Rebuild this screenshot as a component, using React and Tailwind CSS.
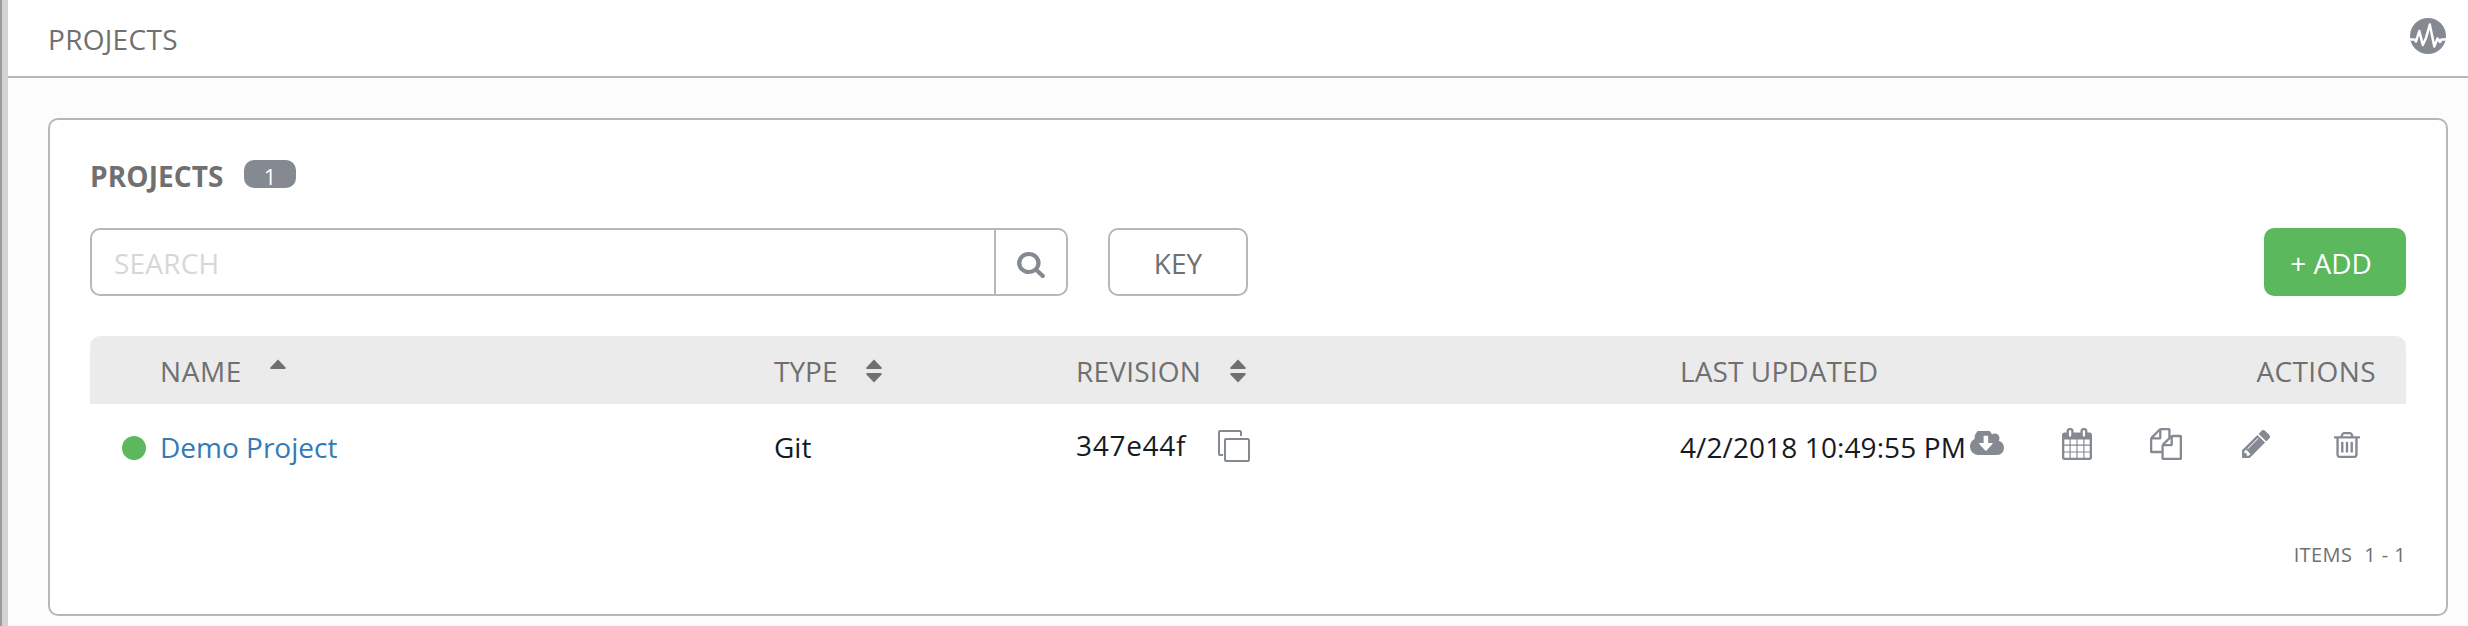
const ICONS = {
  search: {
    box: "0 0 1792 1792",
    d: "M1216 832q0-185-131.5-316.5t-316.5-131.5-316.5 131.5-131.5 316.5 131.5 316.5 316.5 131.5 316.5-131.5 131.5-316.5zm512 832q0 52-38 90t-90 38q-54 0-90-38l-343-342q-179 124-399 124-143 0-273.5-55.5t-225-150-150-225-55.5-273.5 55.5-273.5 150-225 225-150 273.5-55.5 273.5 55.5 225 150 150 225 55.5 273.5q0 220-124 399l343 343q37 37 37 90z",
  },
  calendar: {
    box: "64 0 1664 1792",
    d: "M192 1664h288v-288h-288v288zm352 0h320v-288h-320v288zm-352-352h288v-320h-288v320zm352 0h320v-320h-320v320zm-352-384h288v-288h-288v288zm736 736h320v-288h-320v288zm-384-736h320v-288h-320v288zm768 736h288v-288h-288v288zm-384-352h320v-320h-320v320zm-352-864v-288q0-13-9.5-22.5t-22.5-9.5h-64q-13 0-22.5 9.5t-9.5 22.5v288q0 13 9.5 22.5t22.5 9.5h64q13 0 22.5-9.5t9.5-22.5zm736 864h288v-320h-288v320zm-384-384h320v-288h-320v288zm384 0h288v-288h-288v288zm32-480v-288q0-13-9.5-22.5t-22.5-9.5h-64q-13 0-22.5 9.5t-9.5 22.5v288q0 13 9.5 22.5t22.5 9.5h64q13 0 22.5-9.5t9.5-22.5zm384-64v1280q0 52-38 90t-90 38h-1408q-52 0-90-38t-38-90v-1280q0-52 38-90t90-38h128v-96q0-66 47-113t113-47h64q66 0 113 47t47 113v96h384v-96q0-66 47-113t113-47h64q66 0 113 47t47 113v96h128q52 0 90 38t38 90z",
  },
  files: {
    box: "0 0 1792 1792",
    d: "M1696 384q40 0 68 28t28 68v1216q0 40-28 68t-68 28h-960q-40 0-68-28t-28-68v-288h-544q-40 0-68-28t-28-68v-672q0-40 20-88t48-76l408-408q28-28 76-48t88-20h416q40 0 68 28t28 68v328q68-40 128-40h416zm-544 213l-299 299h299v-299zm-640-384l-299 299h299v-299zm196 647l316-316v-416h-384v416q0 40-28 68t-68 28h-416v640h512v-256q0-40 20-88t48-76zm956 804v-1152h-384v416q0 40-28 68t-68 28h-416v640h896z",
  },
  pencil: {
    box: "128 149 1515 1515",
    d: "M491 1536l91-91-235-235-91 91v107h128v128h107zm523-928q0-22-22-22-10 0-17 7l-542 542q-7 7-7 17 0 22 22 22 10 0 17-7l542-542q7-7 7-17zm-54-192l416 416-832 832h-416v-416zm683 96q0 53-37 90l-166 166-416-416 166-165q36-38 90-38 53 0 91 38l235 234q37 39 37 91z",
  },
  trash: {
    box: "192 128 1408 1536",
    d: "M704 736v576q0 14-9 23t-23 9h-64q-14 0-23-9t-9-23v-576q0-14 9-23t23-9h64q14 0 23 9t9 23zm256 0v576q0 14-9 23t-23 9h-64q-14 0-23-9t-9-23v-576q0-14 9-23t23-9h64q14 0 23 9t9 23zm256 0v576q0 14-9 23t-23 9h-64q-14 0-23-9t-9-23v-576q0-14 9-23t23-9h64q14 0 23 9t9 23zm128 724v-948h-896v948q0 22 7 40.5t14.5 27 10.5 8.5h832q3 0 10.5-8.5t14.5-27 7-40.5zm-672-1076h448l-48-117q-7-9-17-11h-317q-10 2-17 11zm928 32v64q0 14-9 23t-23 9h-96v948q0 83-47 143.5t-113 60.5h-832q-66 0-113-58.5t-47-141.5v-952h-96q-14 0-23-9t-9-23v-64q0-14 9-23t23-9h309l70-167q15-37 54-63t79-26h320q40 0 79 26t54 63l70 167h309q14 0 23 9t9 23z",
  },
  cloud: {
    box: "-64 256 1920 1280",
    d: "M1216 928q0-14-9-23t-23-9h-224v-352q0-13-9.5-22.5t-22.5-9.5h-192q-13 0-22.5 9.5t-9.5 22.5v352h-224q-13 0-22.5 9.5t-9.5 22.5q0 14 9 23l352 352q9 9 23 9t23-9l351-351q10-12 10-24zm640 224q0 159-112.5 271.5t-271.5 112.5h-1088q-185 0-316.5-131.5t-131.5-316.5q0-130 70-240t188-165q-2-30-2-43 0-212 150-362t362-150q156 0 285.5 87t188.5 231q71-62 166-62 106 0 181 75t75 181q0 76-41 138 130 31 213.5 135.5t83.5 238.5z",
  },
};

function Icon({ name, className }) {
  const { box, d } = ICONS[name];
  return (
    <svg viewBox={box} preserveAspectRatio="none" fill="currentColor" className={`shrink-0 ${className}`}>
      <path d={d} />
    </svg>
  );
}

function ActivityIcon() {
  return (
    <svg viewBox="0 0 36 36" className="h-9 w-9 shrink-0">
      <circle cx="18" cy="18" r="18" fill="#848992" />
      <path
        d="M0 21.5H4.5L6 23.5L9.3 13L12.8 27L16 20L19.8 6.5L24.3 28.5L27.5 20.5L30 24L31.5 21.5H36"
        fill="none"
        stroke="#fff"
        strokeWidth="2.5"
        strokeLinejoin="round"
      />
    </svg>
  );
}

function SortIcon({ both }) {
  return (
    <svg viewBox="0 0 16 24" className="h-6 w-4 shrink-0" fill="#707070">
      <path d="M8 .5L15.6 8.5Q16 10 15 10H1Q0 10 .4 8.5Z" />
      {both && <path d="M8 23.5L15.6 15.5Q16 14 15 14H1Q0 14 .4 15.5Z" />}
    </svg>
  );
}

function CopyIcon() {
  return (
    <svg viewBox="0 0 32 32" className="h-8 w-8 shrink-0" fill="none" stroke="#848992" strokeWidth="2">
      <path d="M23 6V2Q23 1 22 1H2Q1 1 1 2V24Q1 25 2 25H5" />
      <rect x="7" y="9" width="24" height="22" rx="1" />
    </svg>
  );
}

export default function App() {
  return (
    <div className="flex h-[626px] w-[2468px] overflow-hidden bg-[#fcfcfc] font-['Open_Sans','Noto_Sans',sans-serif] text-[28px] leading-10 text-[#707070]">
      <div className="w-0.5 bg-[#9b9b9b]" />
      <div className="w-1.5 bg-[#d4d4d4]" />
      <div className="flex min-w-0 flex-1 flex-col">
        <header className="flex h-[78px] items-center justify-between border-b-2 border-[#b7b7b7] bg-white pr-[22px] pl-10">
          <div className="pt-0.5 tracking-[0.3px]">PROJECTS</div>
          <div className="-mt-1">
            <ActivityIcon />
          </div>
        </header>
        <main className="mt-10 mr-5 ml-10 flex h-[498px] flex-col rounded-[10px] border-2 border-[#b7b7b7] bg-white px-10">
          <div className="mt-[34px] flex h-10 items-center">
            <h1 className="w-[154px] pt-[3px] font-bold tracking-[0.1px]">PROJECTS</h1>
            <span className="flex h-7 w-[52px] items-center justify-center rounded-[10px] bg-[#848992] pt-[3px] text-[22px] text-white">1</span>
          </div>
          <div className="mt-[34px] flex h-[68px]">
            <div className="flex w-[978px] rounded-[10px] border-2 border-[#b7b7b7]">
              <div className="flex w-[904px] items-center border-r-2 border-[#b7b7b7] pt-0.5 pl-[22px] tracking-[0.2px] text-[#d7d7d7]">SEARCH</div>
              <div className="flex flex-1 items-center justify-center pt-1 text-[#848992]">
                <Icon name="search" className="h-7 w-[30px]" />
              </div>
            </div>
            <button className="ml-10 w-[140px] rounded-[10px] border-2 border-[#b7b7b7] pt-0.5">KEY</button>
            <button className="ml-auto w-[142px] rounded-[10px] bg-[#5cb85c] pt-0.5 pr-2 text-white">+ ADD</button>
          </div>
          <div className="mt-10 flex h-[68px] items-center rounded-t-[10px] bg-[#ebebeb] pt-0.5 pr-[30px] pl-[70px]">
            <div className="flex w-[614px] items-center"><span className="w-[110px] tracking-[0.6px]">NAME</span><SortIcon /></div>
            <div className="flex w-[302px] items-center"><span className="w-[92px]">TYPE</span><SortIcon both /></div>
            <div className="flex w-[604px] items-center"><span className="w-[154px] tracking-[0.2px]">REVISION</span><SortIcon both /></div>
            <div className="tracking-[0.1px]">LAST UPDATED</div>
            <div className="ml-auto tracking-[0.4px]">ACTIONS</div>
          </div>
          <div className="flex h-[88px] items-center pl-8 text-[#161b1f]">
            <span className="mr-3.5 h-6 w-6 rounded-full bg-[#5cb85c]" />
            <a className="w-[614px] pb-0.5 text-[#337ab7]">Demo Project</a>
            <div className="w-[302px] pb-0.5">Git</div>
            <div className="flex w-[604px] items-center pb-1">
              <span className="w-[142px] pb-0.5 tracking-[0.7px]">347e44f</span>
              <CopyIcon />
            </div>
            <div className="w-[290px] pb-0.5 tracking-[0.1px] whitespace-nowrap">4/2/2018 10:49:55 PM</div>
            <div className="flex items-center pb-2 text-[#848992]">
              <Icon name="cloud" className="mb-0.5 h-6 w-[34px]" />
              <Icon name="calendar" className="ml-[58px] h-8 w-[30px]" />
              <Icon name="files" className="ml-[58px] h-8 w-8" />
              <Icon name="pencil" className="ml-[60px] h-7 w-7" />
              <Icon name="trash" className="mt-0.5 ml-[64px] h-[26px] w-[26px]" />
            </div>
          </div>
          <div className="mt-[43px] flex justify-end gap-3 text-[20px] tracking-[0.4px]">
            <span>ITEMS</span>
            <span>1 - 1</span>
          </div>
        </main>
      </div>
    </div>
  );
}
